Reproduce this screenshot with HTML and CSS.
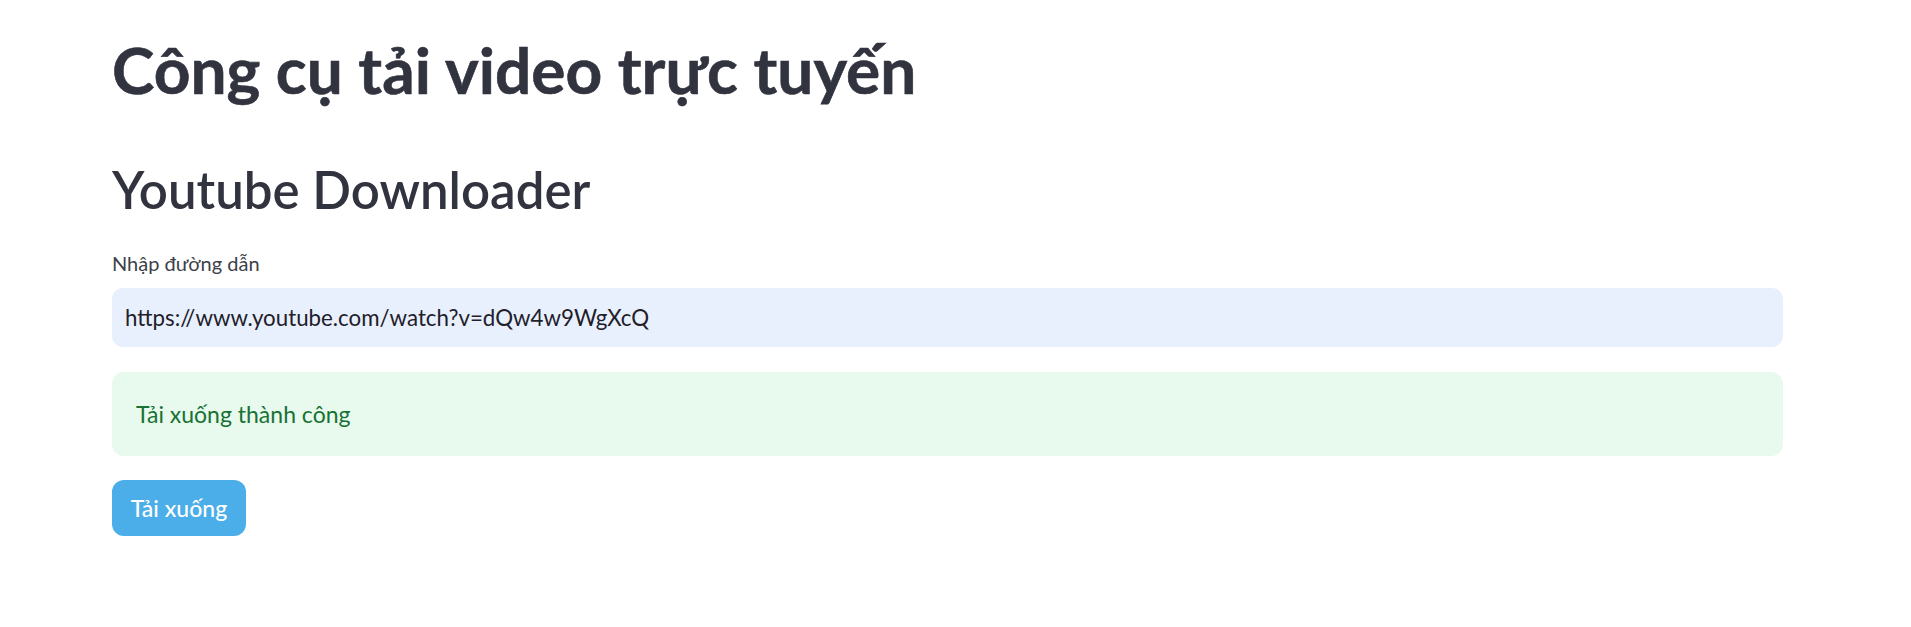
FILE: index.html
```html
<!DOCTYPE html>
<html lang="vi">
<head>
<meta charset="utf-8">
<title>Youtube Downloader</title>
<link rel="stylesheet" href="styles.css">
</head>
<body>
<main class="page">
  <h1 class="title">Công cụ tải video trực tuyến</h1>
  <h2 class="subtitle">Youtube Downloader</h2>
  <div class="field">
    <label class="label" for="url">Nhập đường dẫn</label>
    <div class="input" id="url">https://www.youtube.com/watch?v=dQw4w9WgXcQ</div>
  </div>
  <div class="alert">Tải xuống thành công</div>
  <div class="actions"><button class="btn" type="button">Tải xuống</button></div>
</main>
</body>
</html>
```
FILE: styles.css
```css
html, body {
  margin: 0;
  padding: 0;
  background: #ffffff;
}
body {
  font-family: "Lato", "Open Sans", sans-serif;
  color: #31333f;
}
.page {
  display: flex;
  flex-direction: column;
  padding: 32px 128px 0 112px;
}
.title {
  margin: 0;
  font-size: 64px;
  line-height: 1.2;
  font-weight: 700;
  color: #31333f;
  -webkit-text-stroke: 0.6px #31333f;
}
.subtitle {
  margin: 50px 0 0 0;
  font-size: 51px;
  line-height: 1.2;
  font-weight: 600;
  color: #31333f;
}
.field {
  display: flex;
  flex-direction: column;
  margin-top: 31px;
}
.label {
  font-size: 20px;
  line-height: 1.2;
  color: #3d3f4a;
  margin-bottom: 13px;
}
.input {
  height: 59px;
  box-sizing: border-box;
  display: flex;
  align-items: center;
  padding: 0 13px;
  background: #e8f0fe;
  border-radius: 11px;
  font-size: 22.3px;
  color: #1f2029;
}
.alert {
  margin-top: 25px;
  height: 84px;
  box-sizing: border-box;
  display: flex;
  align-items: center;
  padding: 0 24px;
  background: #e8f9ee;
  border-radius: 12px;
  font-size: 23px;
  color: #177233;
}
.actions {
  display: flex;
  margin-top: 24px;
}
.btn {
  height: 56px;
  width: 134px;
  border: none;
  border-radius: 12px;
  background: #4baee8;
  color: #ffffff;
  font-family: "Lato", "Open Sans", sans-serif;
  font-size: 23px;
  font-weight: 500;
  padding: 0;
}
```
